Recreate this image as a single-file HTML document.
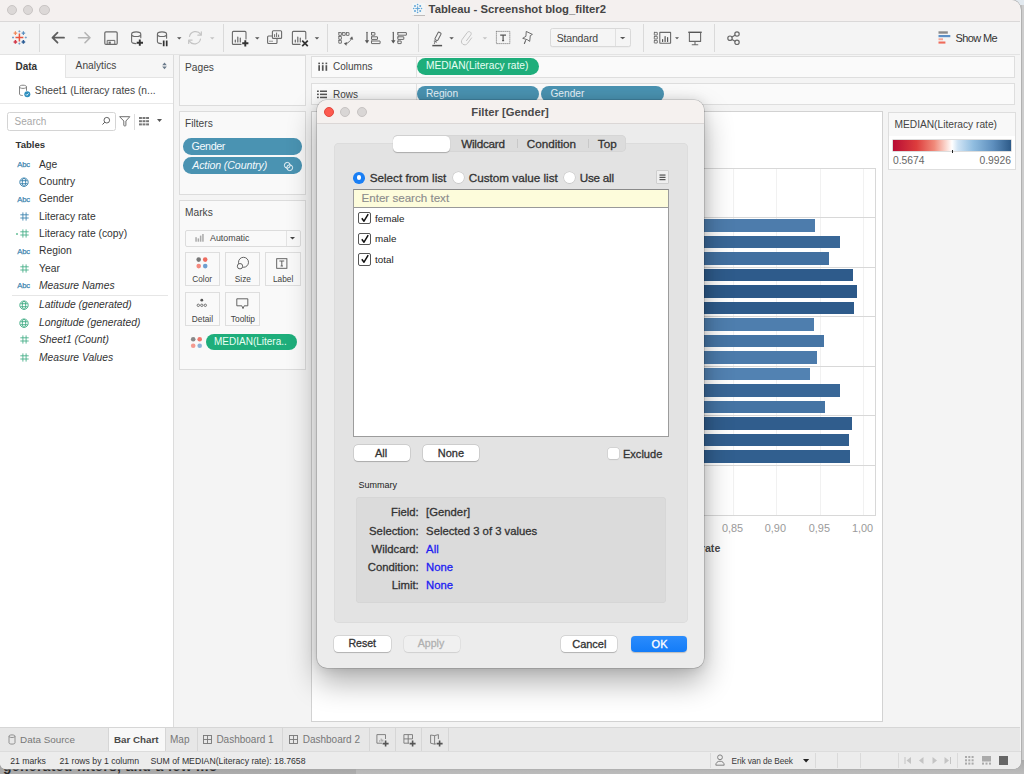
<!DOCTYPE html>
<html><head><meta charset="utf-8">
<style>
*{box-sizing:border-box;margin:0;padding:0}
html,body{width:1024px;height:774px;overflow:hidden;background:#cdcdcd;font-family:"Liberation Sans",sans-serif;color:#333}
.a{position:absolute}
.t{position:absolute;white-space:nowrap}
svg{position:absolute;overflow:visible}
</style></head><body>

<div class="a" style="left:1020.5px;top:0px;width:1px;height:774px;background:#bdbdbd"></div>
<div class="a" style="left:1005px;top:0px;width:19px;height:5px;background:#e2e9ef"></div>
<div class="a" style="left:0px;top:760px;width:1024px;height:14px;background:linear-gradient(#9a9a9a,#adadad)"></div>
<div class="a" style="left:356px;top:760px;width:668px;height:14px;background:linear-gradient(#a9a9a9,#bcbcbc)"></div>
<div class="a" style="left:0;top:740px;width:218px;height:34px;overflow:hidden"><div class="t" style="left:3px;top:17.6px;font-size:14px;line-height:16px;color:#2a2a2a;font-weight:700;letter-spacing:0.3px">generated filters, and a few more</div></div>
<div class="a" style="left:0;top:0;width:1020.7px;height:768.7px;background:#f4f4f4;border-radius:0 10px 8px 6px;overflow:hidden;box-shadow:0 0 0 0.6px #aaa">
<div class="a" style="left:0px;top:0px;width:1020px;height:21px;background:#f4f0ef"></div>
<div class="a" style="left:0px;top:21px;width:1020px;height:1px;background:#dad8d8"></div>
<div class="a" style="left:6.6px;top:4.65px;width:10.3px;height:10.3px;border-radius:50%;background:#dcd8d7;border:0.8px solid #c9c5c4"></div>
<div class="a" style="left:22.85px;top:4.65px;width:10.3px;height:10.3px;border-radius:50%;background:#dcd8d7;border:0.8px solid #c9c5c4"></div>
<div class="a" style="left:39.35px;top:4.65px;width:10.3px;height:10.3px;border-radius:50%;background:#dcd8d7;border:0.8px solid #c9c5c4"></div>
<div class="a" style="left:412px;top:3.1px;width:12.5px;height:12.4px;background:#f3f5f6;box-shadow:0.4px 0.8px 0.8px rgba(0,0,0,.22)"></div>
<svg style="left:412px;top:3px" width="13" height="13" viewBox="0 0 13 13"><g stroke="#5aa2d6" stroke-width="0.8" fill="none">
<path d="M5.6 3.2v4.8M3.2 5.5h4.8"/></g>
<g fill="#62a6d8"><circle cx="5.6" cy="5.5" r="1"/><circle cx="5.6" cy="1.6" r="0.8"/><circle cx="5.6" cy="9.4" r="0.8"/><circle cx="1.7" cy="5.5" r="0.8"/><circle cx="9.5" cy="5.5" r="0.8"/>
<circle cx="3" cy="3" r="1"/><circle cx="8.2" cy="3" r="1"/><circle cx="3" cy="8" r="1"/><circle cx="8.2" cy="8" r="1"/></g></svg>
<div class="t" style="left:428.60px;top:3.07px;font-size:11.3px;line-height:12.62px;color:#444;font-weight:700;font-style:normal;">Tableau - Screenshot blog_filter2</div>
<div class="a" style="left:0px;top:22px;width:1020px;height:32px;background:#f4f4f4"></div>
<div class="a" style="left:0px;top:54px;width:1020px;height:1px;background:#e3e3e3"></div>
<svg style="left:0;top:22px" width="1020" height="33" viewBox="0 22 1020 33">
    <g stroke="#dadada" stroke-width="1">
      <line x1="39.5" y1="24" x2="39.5" y2="52"/>
      <line x1="223.5" y1="24" x2="223.5" y2="52"/>
      <line x1="327.5" y1="24" x2="327.5" y2="52"/>
      <line x1="418.5" y1="24" x2="418.5" y2="52"/>
      <line x1="643.5" y1="24" x2="643.5" y2="52"/>
      <line x1="714.5" y1="24" x2="714.5" y2="52"/>
    </g>
    <!-- tableau logo -->
    <g stroke-width="1.2">
      <path d="M19.4 33.6v7.8M15.5 37.5h7.8" stroke="#e8553f" stroke-width="1.5"/>
      <path d="M15.4 31.3v3.6M13.6 33.1h3.6" stroke="#f08a5d"/>
      <path d="M23.4 31.3v3.6M21.6 33.1h3.6" stroke="#5a8fc0"/>
      <path d="M15.4 40.1v3.6M13.6 41.9h3.6" stroke="#d2384a" stroke-width="1.5"/>
      <path d="M23.4 40.1v3.6M21.6 41.9h3.6" stroke="#2b5c95" stroke-width="1.5"/>
      <path d="M19.4 30.4v2M18.4 31.4h2M19.4 42.6v2M18.4 43.6h2M13 36.5v2M12 37.5h2M25.8 36.5v2M24.8 37.5h2" stroke="#6e9cc8" stroke-width="0.9"/>
    </g>
    <g fill="none" stroke-linecap="round" stroke-linejoin="round">
      <!-- back -->
      <path d="M52.5 37.7h11.5M57.5 32.7l-5 5 5 5" stroke="#5e5e5e" stroke-width="1.8"/>
      <!-- forward -->
      <path d="M78.5 37.7h11.5M85 32.7l5 5-5 5" stroke="#b4b4b4" stroke-width="1.6"/>
      <!-- save -->
      <rect x="104.8" y="31.8" width="12.4" height="12.6" rx="1.2" stroke="#6a6a6a" stroke-width="1.2"/>
      <path d="M107.2 44.2v-3.8h7.6v3.8" stroke="#6a6a6a" stroke-width="1"/>
      <rect x="108.6" y="41.6" width="2.2" height="2.2" fill="#6a6a6a" stroke="none"/>
      <!-- cylinder + -->
      <path d="M131.6 34.2v7.4c0 1.3 1.8 2 4.4 2M131.6 34.2c0-1.5 2.3-2.3 4.6-2.3s4.6.8 4.6 2.3-2.3 2.3-4.6 2.3-4.6-.8-4.6-2.3M140.8 34.2v3.5" stroke="#6a6a6a" stroke-width="1.1"/>
      <path d="M139.8 39.5v6.3M136.7 42.7h6.3" stroke="#333" stroke-width="1.9" stroke-linecap="butt"/>
      <!-- cylinder pause -->
      <path d="M157.4 34.2v7.4c0 1.3 1.8 2 4 2M157.4 34.2c0-1.5 2.3-2.3 4.6-2.3s4.6.8 4.6 2.3-2.3 2.3-4.6 2.3-4.6-.8-4.6-2.3M166.6 34.2v4" stroke="#6a6a6a" stroke-width="1.1"/>
      <path d="M163.7 40.6v5.6M166.7 40.6v5.6" stroke="#333" stroke-width="1.7" stroke-linecap="butt"/>
      <!-- refresh -->
      <path d="M189.5 36.5a6.2 6.2 0 0 1 11.2-2.2M200.5 39a6.2 6.2 0 0 1-11.2 2.2" stroke="#c4c4c4" stroke-width="1.2"/>
      <path d="M201.3 31.8v3.4h-3.4M188.7 43.5v-3.4h3.4" stroke="#c4c4c4" stroke-width="1.2"/>
      <!-- new worksheet -->
      <path d="M241 44.4h-7.6c-.6 0-1-.4-1-1V32.4c0-.6.4-1 1-1h11.6c.6 0 1 .4 1 1V39" stroke="#6a6a6a" stroke-width="1.1"/>
      <path d="M235.3 42v-2M237.8 42v-5M240.3 42v-4" stroke="#6a6a6a" stroke-width="1.2"/>
      <path d="M245.3 40.2v6.2M242.2 43.3h6.2" stroke="#333" stroke-width="1.9" stroke-linecap="butt"/>
      <!-- duplicate -->
      <rect x="267.6" y="36" width="9.4" height="7.5" rx="1" stroke="#6a6a6a" stroke-width="1.1"/>
      <rect x="272.4" y="30.8" width="9.2" height="7.6" rx="1" stroke="#6a6a6a" stroke-width="1.1" fill="#f4f4f4"/>
      <path d="M270 41.6v-.6M272 41.6v-.6M274.6 36.6v-2M276.6 36.6v-3.6M278.6 36.6v-1.6" stroke="#6a6a6a" stroke-width="1"/>
      <!-- clear sheet -->
      <path d="M300 44.4h-6.6c-.6 0-1-.4-1-1V32.4c0-.6.4-1 1-1h11.4c.6 0 1 .4 1 1V39" stroke="#6a6a6a" stroke-width="1.1"/>
      <path d="M295.3 42v-2M297.8 42v-5M300.3 42v-4" stroke="#6a6a6a" stroke-width="1.2"/>
      <path d="M302.2 40.6l5.6 5.6M307.8 40.6l-5.6 5.6" stroke="#333" stroke-width="1.7" stroke-linecap="butt"/>
      <!-- swap -->
      <g stroke="#6a6a6a" stroke-width="0.9">
        <rect x="338.8" y="32.6" width="2.6" height="2.8" rx=".15"/><rect x="342.6" y="32.6" width="2.6" height="2.8" rx=".15"/><rect x="346.4" y="32.6" width="2.6" height="2.8" rx=".15"/>
        <rect x="338.8" y="36.5" width="2.6" height="2.8" rx=".15"/><rect x="338.8" y="40.4" width="2.6" height="2.8" rx=".15"/>
      </g>
      <path d="M345.6 43.8c2.6-.7 4.8-2.6 5.8-5" stroke="#6a6a6a" stroke-width="0.9"/>
      <path d="M350.2 38.4l1.9-1.6.6 2.4z M346.6 42.6l-2.4.9 1.9 1.6z" fill="#555" stroke="#555" stroke-width="0.5"/>
      <!-- sort asc -->
      <path d="M367 32.3v8.5" stroke="#555" stroke-width="1.1"/><path d="M364.8 40.2h4.4L367 43.6z" fill="#555" stroke="none"/>
      <rect x="371.5" y="32.6" width="3.4" height="2.6" rx=".2" stroke="#6a6a6a" stroke-width="1"/>
      <rect x="371.5" y="36.8" width="6" height="2.6" rx=".2" stroke="#6a6a6a" stroke-width="1"/>
      <rect x="371.5" y="41" width="8.6" height="2.6" rx=".2" stroke="#6a6a6a" stroke-width="1"/>
      <!-- sort desc -->
      <path d="M393.3 32.3v8.5" stroke="#555" stroke-width="1.1"/><path d="M391.1 40.2h4.4L393.3 43.6z" fill="#555" stroke="none"/>
      <rect x="397.8" y="32.6" width="8.6" height="2.6" rx=".2" stroke="#6a6a6a" stroke-width="1"/>
      <rect x="397.8" y="36.8" width="6" height="2.6" rx=".2" stroke="#6a6a6a" stroke-width="1"/>
      <rect x="397.8" y="41" width="3.4" height="2.6" rx=".2" stroke="#6a6a6a" stroke-width="1"/>
      <!-- pen -->
      <g transform="translate(-0.8 0.4) rotate(27 438.2 37)" stroke="#6a6a6a">
        <rect x="436.6" y="31.6" width="3.3" height="8.4" rx="0.9" stroke-width="1"/>
        <path d="M436.6 41.6h3.3" stroke-width="1.1" stroke-linecap="butt"/>
        <path d="M438.2 42.8v1.2" stroke-width="0.9"/>
      </g>
      <path d="M432.3 45.6h9.8" stroke="#555" stroke-width="1.5" stroke-linecap="butt"/>
      <!-- paperclip -->
      <path d="M466.5 39.5l4.2-5.6c.8-1.1.6-2.4-.4-3.1s-2.3-.5-3.1.6l-5 6.8c-1.3 1.7-.9 3.7.6 4.8s3.5.8 4.8-.9l4-5.4" stroke="#c4c4c4" stroke-width="1" transform="translate(0,1.2)"/>
      <!-- T dashed -->
      <rect x="496.4" y="31.4" width="13.4" height="12.2" stroke="#8a8a8a" stroke-width="0.8" stroke-dasharray="1 1.1"/>
      <path d="M500.2 35.1h5.8M503.1 35.1v5.4M502.1 40.6h2" stroke="#555" stroke-width="1.2" stroke-linecap="butt"/>
      <!-- pin -->
      <path d="M526.6 31.6l5.8 2.8-2.1 1.2-.6 5.8-2.2-1.6-4.8-1.5 2.9-1.8z" stroke="#666" stroke-width="0.95"/>
      <path d="M525.6 40.6l-1.2 2.9" stroke="#666" stroke-width="1.1"/>
      <!-- show cards -->
      <g stroke="#6a6a6a" stroke-width="0.9">
        <rect x="654.3" y="32.4" width="3" height="2.6" rx=".15"/><rect x="654.3" y="36.4" width="3" height="2.6" rx=".15"/><rect x="654.3" y="40.4" width="3" height="2.6" rx=".15"/>
      </g>
      <rect x="659.8" y="32.4" width="10.8" height="10.8" rx=".2" stroke="#6a6a6a" stroke-width="1.1"/>
      <path d="M662.6 41.5v-2M665.1 41.5v-5M667.6 41.5v-4" stroke="#555" stroke-width="1.2"/>
      <!-- presentation -->
      <path d="M688.3 32.3h13.4" stroke="#555" stroke-width="1.4" stroke-linecap="butt"/>
      <path d="M689.4 32.8v8.6h11.2v-8.6M695 41.4v3.2M692.2 44.7h5.6" stroke="#6a6a6a" stroke-width="1.1"/>
      <!-- share -->
      <circle cx="737" cy="34" r="2.2" stroke="#6a6a6a" stroke-width="1.2"/>
      <circle cx="730" cy="38.2" r="2.2" stroke="#6a6a6a" stroke-width="1.2"/>
      <circle cx="737" cy="42.3" r="2.2" stroke="#6a6a6a" stroke-width="1.2"/>
      <path d="M732 37l3-1.8M732 39.4l3 1.8" stroke="#6a6a6a" stroke-width="1.2"/>
    </g>
    <!-- dropdown triangles -->
    <g fill="#555">
      <path d="M177 37.2h4.5l-2.25 2.2z"/>
      <path d="M255 37.2h4.5l-2.25 2.2z"/>
      <path d="M314.7 37.2h4.5l-2.25 2.2z"/>
      <path d="M449.3 37.2h4.5l-2.25 2.2z"/>
      <path d="M675 37.2h4l-2 2z"/>
    </g>
    <g fill="#c4c4c4">
      <path d="M210 37.2h4.5l-2.25 2.2z"/>
      <path d="M482.7 37.2h4.5l-2.25 2.2z"/>
    </g>
    <!-- show me -->
    <rect x="938.5" y="31.3" width="9.3" height="2.4" fill="#8a8a8a"/>
    <rect x="938.5" y="35" width="11.8" height="2.2" fill="#5c8fc6"/>
    <rect x="938.5" y="38.3" width="4.5" height="1.9" fill="#f4a596"/>
    <rect x="938.5" y="41.5" width="6.9" height="2.1" fill="#ef6b5a"/>
  </svg>
<div class="a" style="left:550.3px;top:28.2px;width:80.6px;height:18.6px;border:1px solid #d9d9d9;border-radius:2.5px;background:#f5f5f5;box-shadow:0 0.5px 0.5px rgba(0,0,0,.05)"></div>
<div class="a" style="left:615.3px;top:29px;width:1px;height:16.6px;background:#e0e0e0"></div>
<svg style="left:620.3px;top:36.9px" width="6" height="3"><path d="M0 0h5.3l-2.65 2.3z" fill="#555"/></svg>
<div class="t" style="left:556.80px;top:32.70px;font-size:10.5px;line-height:11.73px;color:#444;font-weight:400;font-style:normal;letter-spacing:-0.2px">Standard</div>
<div class="t" style="left:955.60px;top:31.65px;font-size:11px;line-height:12.29px;color:#333;font-weight:400;font-style:normal;letter-spacing:-0.65px">Show Me</div>
<div class="a" style="left:0px;top:55px;width:173px;height:672px;background:#fff"></div>
<div class="a" style="left:173px;top:55px;width:1px;height:672px;background:#dcdcdc"></div>
<div class="a" style="left:65px;top:55px;width:108px;height:23.4px;background:#f6f6f6;border-left:1px solid #e4e4e4;border-bottom:1px solid #e4e4e4"></div>
<div class="t" style="left:15.50px;top:60.55px;font-size:10px;line-height:11.17px;color:#333;font-weight:700;font-style:normal;">Data</div>
<div class="t" style="left:75.60px;top:60.37px;font-size:10.2px;line-height:11.39px;color:#444;font-weight:400;font-style:normal;">Analytics</div>
<svg style="left:161.8px;top:62px" width="5" height="8"><path d="M0.2 3.2L2.5 0.6 4.8 3.2zM0.2 4.6L2.5 7.2 4.8 4.6z" fill="#6a7a8a"/></svg>
<svg style="left:18px;top:84px" width="14" height="14" viewBox="0 0 14 14"><g fill="none" stroke="#777" stroke-width="0.9">
<path d="M1.5 2.8v7.2c0 .9 1.3 1.5 3.2 1.5M1.5 2.8c0-1 1.5-1.6 3.5-1.6s3.5.6 3.5 1.6-1.5 1.6-3.5 1.6-3.5-.6-3.5-1.6M8.5 2.8v4"/></g>
<circle cx="9.3" cy="10.3" r="3" fill="#2f8fbf"/><path d="M7.9 10.3l1 1 1.7-1.9" stroke="#fff" stroke-width="0.9" fill="none"/></svg>
<div class="t" style="left:34.80px;top:84.92px;font-size:10.25px;line-height:11.45px;color:#444;font-weight:400;font-style:normal;">Sheet1 (Literacy rates (n...</div>
<div class="a" style="left:0px;top:102.5px;width:173px;height:1px;background:#e8e8e8"></div>
<div class="a" style="left:7px;top:112px;width:108.5px;height:18.5px;border:1px solid #d4d4d4;border-radius:2.5px;background:#fff"></div>
<div class="t" style="left:14.60px;top:115.75px;font-size:10px;line-height:11.17px;color:#a8a8a8;font-weight:400;font-style:normal;">Search</div>
<svg style="left:101px;top:116px" width="10" height="10" viewBox="0 0 10 10"><circle cx="5.8" cy="4.2" r="2.8" fill="none" stroke="#555" stroke-width="0.9"/><path d="M3.8 6.2L1.5 8.5" stroke="#555" stroke-width="1"/></svg>
<svg style="left:119px;top:116px" width="12" height="11" viewBox="0 0 12 11"><path d="M0.6 0.7h10.2L6.9 5v4.3c0 .4-.3.6-.6.6h-.9c-.3 0-.6-.2-.6-.6V5z" fill="none" stroke="#666" stroke-width="0.95" stroke-linejoin="round"/></svg>
<div class="a" style="left:134.3px;top:114px;width:1px;height:16px;background:#ddd"></div>
<svg style="left:139px;top:116.5px" width="11" height="9"><g fill="#777"><rect x="0" y="0" width="2.9" height="2"/><rect x="3.55" y="0" width="2.9" height="2"/><rect x="7.1" y="0" width="2.9" height="2"/><rect x="0" y="3.2" width="2.9" height="2"/><rect x="3.55" y="3.2" width="2.9" height="2"/><rect x="7.1" y="3.2" width="2.9" height="2"/><rect x="0" y="6.4" width="2.9" height="2"/><rect x="3.55" y="6.4" width="2.9" height="2"/><rect x="7.1" y="6.4" width="2.9" height="2"/></g></svg>
<svg style="left:157px;top:119px" width="6" height="4"><path d="M0 0h5l-2.5 3z" fill="#555"/></svg>
<div class="t" style="left:15.50px;top:140.21px;font-size:9.6px;line-height:10.72px;color:#333;font-weight:700;font-style:normal;">Tables</div>
<div class="t" style="left:17.30px;top:160.93px;font-size:7.7px;line-height:8.60px;color:#3f86b0;font-weight:400;font-style:normal;letter-spacing:-0.25px;-webkit-text-stroke:0.25px #3f86b0">Abc</div>
<div class="t" style="left:39.00px;top:158.68px;font-size:10.3px;line-height:11.51px;color:#333;font-weight:400;font-style:normal;">Age</div>
<svg style="left:18.5px;top:177.15px" width="10" height="11" viewBox="0 0 10 11"><g fill="none" stroke="#3f86b0" stroke-width="0.95"><circle cx="5" cy="5.2" r="4.2"/><path d="M1.3 3.7h7.4M1.3 6.7h7.4"/><ellipse cx="5" cy="5.2" rx="1.7" ry="4.2"/></g></svg>
<div class="t" style="left:39.00px;top:176.03px;font-size:10.3px;line-height:11.51px;color:#333;font-weight:400;font-style:normal;">Country</div>
<div class="t" style="left:17.30px;top:195.63px;font-size:7.7px;line-height:8.60px;color:#3f86b0;font-weight:400;font-style:normal;letter-spacing:-0.25px;-webkit-text-stroke:0.25px #3f86b0">Abc</div>
<div class="t" style="left:39.00px;top:193.38px;font-size:10.3px;line-height:11.51px;color:#333;font-weight:400;font-style:normal;">Gender</div>
<svg style="left:19.6px;top:211.85px" width="9" height="9" viewBox="0 0 9 9"><path d="M2.9 0.4v8.2M6.1 0.4v8.2M0.3 2.8h8.4M0.3 6h8.4" stroke="#3f86b0" stroke-width="0.9" fill="none"/></svg>
<div class="t" style="left:39.00px;top:210.73px;font-size:10.3px;line-height:11.51px;color:#333;font-weight:400;font-style:normal;">Literacy rate</div>
<svg style="left:19.6px;top:229.20px" width="9" height="9" viewBox="0 0 9 9"><path d="M2.9 0.4v8.2M6.1 0.4v8.2M0.3 2.8h8.4M0.3 6h8.4" stroke="#4ab08a" stroke-width="0.9" fill="none"/></svg>
<div class="a" style="left:16px;top:233.30px;width:2px;height:2px;background:#8ccfb2"></div>
<div class="t" style="left:39.00px;top:228.08px;font-size:10.3px;line-height:11.51px;color:#333;font-weight:400;font-style:normal;">Literacy rate (copy)</div>
<div class="t" style="left:17.30px;top:247.68px;font-size:7.7px;line-height:8.60px;color:#3f86b0;font-weight:400;font-style:normal;letter-spacing:-0.25px;-webkit-text-stroke:0.25px #3f86b0">Abc</div>
<div class="t" style="left:39.00px;top:245.43px;font-size:10.3px;line-height:11.51px;color:#333;font-weight:400;font-style:normal;">Region</div>
<svg style="left:19.6px;top:263.90px" width="9" height="9" viewBox="0 0 9 9"><path d="M2.9 0.4v8.2M6.1 0.4v8.2M0.3 2.8h8.4M0.3 6h8.4" stroke="#4ab08a" stroke-width="0.9" fill="none"/></svg>
<div class="t" style="left:39.00px;top:262.78px;font-size:10.3px;line-height:11.51px;color:#333;font-weight:400;font-style:normal;">Year</div>
<div class="t" style="left:17.30px;top:282.38px;font-size:7.7px;line-height:8.60px;color:#3f86b0;font-weight:400;font-style:normal;letter-spacing:-0.25px;-webkit-text-stroke:0.25px #3f86b0">Abc</div>
<div class="t" style="left:39.00px;top:280.13px;font-size:10.3px;line-height:11.51px;color:#333;font-weight:400;font-style:italic;">Measure Names</div>
<div class="a" style="left:12.3px;top:295.2px;width:156px;height:1px;background:#e6e6e6"></div>
<svg style="left:18.5px;top:300.20px" width="10" height="11" viewBox="0 0 10 11"><g fill="none" stroke="#4ab08a" stroke-width="0.95"><circle cx="5" cy="5.2" r="4.2"/><path d="M1.3 3.7h7.4M1.3 6.7h7.4"/><ellipse cx="5" cy="5.2" rx="1.7" ry="4.2"/></g></svg>
<div class="t" style="left:39.00px;top:299.08px;font-size:10.3px;line-height:11.51px;color:#333;font-weight:400;font-style:italic;">Latitude (generated)</div>
<svg style="left:18.5px;top:317.75px" width="10" height="11" viewBox="0 0 10 11"><g fill="none" stroke="#4ab08a" stroke-width="0.95"><circle cx="5" cy="5.2" r="4.2"/><path d="M1.3 3.7h7.4M1.3 6.7h7.4"/><ellipse cx="5" cy="5.2" rx="1.7" ry="4.2"/></g></svg>
<div class="t" style="left:39.00px;top:316.63px;font-size:10.3px;line-height:11.51px;color:#333;font-weight:400;font-style:italic;">Longitude (generated)</div>
<svg style="left:19.6px;top:335.30px" width="9" height="9" viewBox="0 0 9 9"><path d="M2.9 0.4v8.2M6.1 0.4v8.2M0.3 2.8h8.4M0.3 6h8.4" stroke="#4ab08a" stroke-width="0.9" fill="none"/></svg>
<div class="t" style="left:39.00px;top:334.18px;font-size:10.3px;line-height:11.51px;color:#333;font-weight:400;font-style:italic;">Sheet1 (Count)</div>
<svg style="left:19.6px;top:352.85px" width="9" height="9" viewBox="0 0 9 9"><path d="M2.9 0.4v8.2M6.1 0.4v8.2M0.3 2.8h8.4M0.3 6h8.4" stroke="#4ab08a" stroke-width="0.9" fill="none"/></svg>
<div class="t" style="left:39.00px;top:351.73px;font-size:10.3px;line-height:11.51px;color:#333;font-weight:400;font-style:italic;">Measure Values</div>
<div class="a" style="left:179.2px;top:55.3px;width:126.6px;height:50.4px;background:#f9f9f9;border:1px solid #dcdcdc"></div>
<div class="t" style="left:185.00px;top:62.27px;font-size:10.2px;line-height:11.39px;color:#444;font-weight:400;font-style:normal;">Pages</div>
<div class="a" style="left:179.2px;top:111.3px;width:126.6px;height:83.3px;background:#f9f9f9;border:1px solid #dcdcdc"></div>
<div class="t" style="left:185.00px;top:118.37px;font-size:10.2px;line-height:11.39px;color:#444;font-weight:400;font-style:normal;">Filters</div>
<div class="a" style="left:183px;top:138.2px;width:119px;height:16.5px;border-radius:8.25px;background:#4a93b2"></div>
<div class="t" style="left:191.60px;top:140.13px;font-size:10.8px;line-height:12.06px;color:#f4fafd;font-weight:400;font-style:normal;letter-spacing:-0.45px">Gender</div>
<div class="a" style="left:183px;top:157.4px;width:119px;height:16.5px;border-radius:8.25px;background:#4a93b2"></div>
<div class="t" style="left:192.20px;top:160.01px;font-size:10.6px;line-height:11.84px;color:#f4fafd;font-weight:400;font-style:italic;letter-spacing:-0.1px">Action (Country)</div>
<svg style="left:282.6px;top:160.6px" width="11" height="11" viewBox="0 0 11 11"><g fill="none" stroke="#fff" stroke-width="0.9"><circle cx="4.3" cy="4.3" r="2.9"/><circle cx="6.7" cy="6.7" r="2.9"/></g></svg>
<div class="a" style="left:179.2px;top:199.6px;width:126.6px;height:170.8px;background:#f9f9f9;border:1px solid #dcdcdc"></div>
<div class="t" style="left:185.00px;top:206.57px;font-size:10.2px;line-height:11.39px;color:#444;font-weight:400;font-style:normal;">Marks</div>
<div class="a" style="left:185px;top:229.5px;width:115.6px;height:17.2px;border:1px solid #dcdcdc;border-radius:2px;background:#f9f9f9"></div>
<div class="a" style="left:285.5px;top:230.5px;width:1px;height:15.2px;background:#e4e4e4"></div>
<svg style="left:290px;top:236.8px" width="6" height="4"><path d="M0 0h5l-2.5 2.6z" fill="#444"/></svg>
<svg style="left:195px;top:234px" width="9" height="8"><g fill="#aaa"><rect x="0.3" y="3.2" width="1.5" height="4.5"/><rect x="2.6" y="4.4" width="1.5" height="3.3"/><rect x="4.9" y="1.6" width="1.5" height="6.1"/><rect x="7.2" y="0" width="1.5" height="7.7"/></g></svg>
<div class="t" style="left:210.00px;top:233.55px;font-size:8.9px;line-height:9.94px;color:#444;font-weight:400;font-style:normal;">Automatic</div>
<div class="a" style="left:185px;top:251.8px;width:35px;height:34.2px;background:#f9f9f9;border:1px solid #dedede"></div>
<div class="a" style="left:225.4px;top:251.8px;width:34.2px;height:34.2px;background:#f9f9f9;border:1px solid #dedede"></div>
<div class="a" style="left:265.4px;top:251.8px;width:35.2px;height:34.2px;background:#f9f9f9;border:1px solid #dedede"></div>
<div class="a" style="left:185px;top:291.6px;width:35px;height:34.2px;background:#f9f9f9;border:1px solid #dedede"></div>
<div class="a" style="left:225.4px;top:291.6px;width:34.2px;height:34.2px;background:#f9f9f9;border:1px solid #dedede"></div>
<svg style="left:194px;top:255px" width="16" height="16"><circle cx="4.7" cy="4.6" r="2.3" fill="#777"/><circle cx="11.2" cy="4.6" r="2.3" fill="#ef6b5f"/><circle cx="4.7" cy="11.1" r="2.3" fill="#f4897e"/><circle cx="11.2" cy="11.1" r="2.3" fill="#6e9fd0"/></svg>
<div class="t" style="left:192.20px;top:275.29px;font-size:8.3px;line-height:9.27px;color:#444;font-weight:400;font-style:normal;">Color</div>
<svg style="left:235px;top:256px" width="16" height="16" viewBox="0 0 16 16"><g fill="none" stroke="#555" stroke-width="0.9"><circle cx="8.5" cy="6.3" r="5"/><circle cx="5" cy="10.2" r="2.7" fill="#f9f9f9"/></g></svg>
<div class="t" style="left:234.80px;top:275.29px;font-size:8.3px;line-height:9.27px;color:#444;font-weight:400;font-style:normal;">Size</div>
<svg style="left:276px;top:257.5px" width="12" height="11" viewBox="0 0 12 11"><rect x="0.7" y="0.7" width="10.2" height="9.6" fill="none" stroke="#555" stroke-width="0.9"/><path d="M3.4 3h4.8M5.8 3v5M4.6 8h2.4" stroke="#555" stroke-width="0.9" fill="none"/></svg>
<div class="t" style="left:273.00px;top:275.29px;font-size:8.3px;line-height:9.27px;color:#444;font-weight:400;font-style:normal;">Label</div>
<svg style="left:196px;top:297px" width="13" height="11" viewBox="0 0 13 11"><circle cx="5.8" cy="3.2" r="1.4" fill="#555"/><g fill="none" stroke="#555" stroke-width="0.8"><circle cx="2.3" cy="8.3" r="1.2"/><circle cx="5.8" cy="8.3" r="1.2"/><circle cx="9.3" cy="8.3" r="1.2"/></g></svg>
<div class="t" style="left:191.80px;top:315.09px;font-size:8.3px;line-height:9.27px;color:#444;font-weight:400;font-style:normal;">Detail</div>
<svg style="left:236px;top:297.5px" width="13" height="12" viewBox="0 0 13 12"><path d="M0.8 0.8h11v7H8.2L7 10.6 5.8 7.8H0.8z" fill="none" stroke="#555" stroke-width="0.9" stroke-linejoin="round"/></svg>
<div class="t" style="left:230.80px;top:315.00px;font-size:8.4px;line-height:9.38px;color:#444;font-weight:400;font-style:normal;">Tooltip</div>
<svg style="left:189.5px;top:335.5px" width="13" height="13"><circle cx="3.2" cy="3.2" r="2.3" fill="#888"/><circle cx="9.7" cy="3.2" r="2.3" fill="#f0776c"/><circle cx="3.2" cy="9.7" r="2.3" fill="#f49a90"/><circle cx="9.7" cy="9.7" r="2.3" fill="#8db2d8"/></svg>
<div class="a" style="left:205.5px;top:333.6px;width:91.7px;height:16.4px;border-radius:8.2px;background:#1eae7b"></div>
<div class="t" style="left:214.00px;top:336.15px;font-size:10px;line-height:11.17px;color:#e8fff4;font-weight:400;font-style:normal;">MEDIAN(Litera..</div>
<div class="a" style="left:311.3px;top:55.5px;width:704px;height:22px;background:#fafafa;border:1px solid #dedede"></div>
<div class="a" style="left:415.5px;top:56.5px;width:1px;height:20px;background:#e2e2e2"></div>
<div class="a" style="left:311.3px;top:83.3px;width:704px;height:22px;background:#fafafa;border:1px solid #dedede"></div>
<div class="a" style="left:415.5px;top:84.3px;width:1px;height:20px;background:#e2e2e2"></div>
<svg style="left:317.5px;top:61.5px" width="10" height="10"><g fill="#555"><rect x="0.3" y="0.6" width="1.7" height="1.6"/><rect x="3.9" y="0.6" width="1.7" height="1.6"/><rect x="7.5" y="0.6" width="1.7" height="1.6"/><rect x="0.3" y="3.2" width="1.7" height="5.6"/><rect x="3.9" y="3.2" width="1.7" height="5.6"/><rect x="7.5" y="3.2" width="1.7" height="5.6"/></g></svg>
<div class="t" style="left:333.00px;top:60.75px;font-size:10px;line-height:11.17px;color:#444;font-weight:400;font-style:normal;">Columns</div>
<svg style="left:317px;top:89.5px" width="11" height="10"><g fill="#555"><rect x="0" y="0.5" width="1.8" height="1.5"/><rect x="3" y="0.5" width="7" height="1.5"/><rect x="0" y="3.6" width="1.8" height="1.5"/><rect x="3" y="3.6" width="7" height="1.5"/><rect x="0" y="6.7" width="1.8" height="1.5"/><rect x="3" y="6.7" width="7" height="1.5"/></g></svg>
<div class="t" style="left:333.00px;top:88.55px;font-size:10px;line-height:11.17px;color:#444;font-weight:400;font-style:normal;">Rows</div>
<div class="a" style="left:416.8px;top:57.8px;width:122.5px;height:16.8px;border-radius:8.4px;background:#1eae7b"></div>
<div class="t" style="left:425.90px;top:60.47px;font-size:10.2px;line-height:11.39px;color:#e8fff4;font-weight:400;font-style:normal;">MEDIAN(Literacy rate)</div>
<div class="a" style="left:416.8px;top:85.6px;width:122.5px;height:16.8px;border-radius:8.4px;background:#4a93b2"></div>
<div class="t" style="left:425.90px;top:88.27px;font-size:10.2px;line-height:11.39px;color:#e8f4fa;font-weight:400;font-style:normal;">Region</div>
<div class="a" style="left:541.3px;top:85.6px;width:122.5px;height:16.8px;border-radius:8.4px;background:#4a93b2"></div>
<div class="t" style="left:550.40px;top:88.27px;font-size:10.2px;line-height:11.39px;color:#e8f4fa;font-weight:400;font-style:normal;">Gender</div>
<div class="a" style="left:311.3px;top:111.25px;width:571.5px;height:610.5px;background:#fff;border:1px solid #d2d2d2"></div>
<div class="a" style="left:400px;top:167.5px;width:475.5px;height:1px;background:#d8d8d8"></div>
<div class="a" style="left:875px;top:167.5px;width:1px;height:348px;background:#d8d8d8"></div>
<div class="a" style="left:400px;top:514.8px;width:476px;height:1px;background:#d8d8d8"></div>
<div class="a" style="left:690.0px;top:168.5px;width:1px;height:346.3px;background:#f1f1f1"></div>
<div class="a" style="left:733.2px;top:168.5px;width:1px;height:346.3px;background:#f1f1f1"></div>
<div class="a" style="left:776.4px;top:168.5px;width:1px;height:346.3px;background:#f1f1f1"></div>
<div class="a" style="left:819.7px;top:168.5px;width:1px;height:346.3px;background:#f1f1f1"></div>
<div class="a" style="left:862.9px;top:168.5px;width:1px;height:346.3px;background:#f1f1f1"></div>
<div class="a" style="left:400px;top:217px;width:475.5px;height:1px;background:#d8d8d8"></div>
<div class="a" style="left:400px;top:266.5px;width:475.5px;height:1px;background:#d8d8d8"></div>
<div class="a" style="left:400px;top:316px;width:475.5px;height:1px;background:#d8d8d8"></div>
<div class="a" style="left:400px;top:365.5px;width:475.5px;height:1px;background:#d8d8d8"></div>
<div class="a" style="left:400px;top:415px;width:475.5px;height:1px;background:#d8d8d8"></div>
<div class="a" style="left:400px;top:464.5px;width:475.5px;height:1px;background:#d8d8d8"></div>
<div class="a" style="left:600px;top:219.4px;width:215.29999999999995px;height:12.2px;background:#4d7cac"></div>
<div class="a" style="left:600px;top:235.9px;width:240.0px;height:12.2px;background:#396797"></div>
<div class="a" style="left:600px;top:252.4px;width:229.20000000000005px;height:12.2px;background:#4270a0"></div>
<div class="a" style="left:600px;top:268.9px;width:253.39999999999998px;height:12.2px;background:#2e5b8b"></div>
<div class="a" style="left:600px;top:285.4px;width:256.79999999999995px;height:12.2px;background:#2c5989"></div>
<div class="a" style="left:600px;top:301.9px;width:254.10000000000002px;height:12.2px;background:#2e5b8b"></div>
<div class="a" style="left:600px;top:318.4px;width:213.70000000000005px;height:12.2px;background:#4e7eae"></div>
<div class="a" style="left:600px;top:334.9px;width:224.39999999999998px;height:12.2px;background:#4675a5"></div>
<div class="a" style="left:600px;top:351.4px;width:216.79999999999995px;height:12.2px;background:#4c7bab"></div>
<div class="a" style="left:600px;top:367.9px;width:209.5px;height:12.2px;background:#5282b2"></div>
<div class="a" style="left:600px;top:384.4px;width:239.89999999999998px;height:12.2px;background:#396797"></div>
<div class="a" style="left:600px;top:400.9px;width:225.0px;height:12.2px;background:#4574a4"></div>
<div class="a" style="left:600px;top:417.4px;width:251.70000000000005px;height:12.2px;background:#305d8d"></div>
<div class="a" style="left:600px;top:433.9px;width:249.20000000000005px;height:12.2px;background:#325f8f"></div>
<div class="a" style="left:600px;top:450.4px;width:249.79999999999995px;height:12.2px;background:#315f8f"></div>
<div class="t" style="left:732.50px;transform:translateX(-50%);top:521.94px;font-size:10.9px;line-height:12.18px;color:#9a9a9a;font-weight:400;font-style:normal;">0,85</div>
<div class="t" style="left:775.40px;transform:translateX(-50%);top:521.94px;font-size:10.9px;line-height:12.18px;color:#9a9a9a;font-weight:400;font-style:normal;">0,90</div>
<div class="t" style="left:819.40px;transform:translateX(-50%);top:521.94px;font-size:10.9px;line-height:12.18px;color:#9a9a9a;font-weight:400;font-style:normal;">0,95</div>
<div class="t" style="left:862.50px;transform:translateX(-50%);top:521.94px;font-size:10.9px;line-height:12.18px;color:#9a9a9a;font-weight:400;font-style:normal;">1,00</div>
<div class="t" style="left:720.30px;transform:translateX(-100%);top:542.61px;font-size:10.6px;line-height:11.84px;color:#4a4a4a;font-weight:700;font-style:normal;">Literacy rate</div>
<div class="a" style="left:888.4px;top:111.5px;width:127.3px;height:58.6px;background:#fff;border:1px solid #dedede"></div>
<div class="a" style="left:889.4px;top:112.5px;width:125.3px;height:23.5px;background:#f8f8f8"></div>
<div class="t" style="left:894.50px;top:118.77px;font-size:10.2px;line-height:11.39px;color:#444;font-weight:400;font-style:normal;">MEDIAN(Literacy rate)</div>
<div class="a" style="left:892.9px;top:139.8px;width:118.1px;height:11.5px;background:linear-gradient(90deg,#b80d35 0%,#dd3d3d 20%,#f08a7a 35%,#fbd8d0 45%,#ffffff 50%,#cfe3f4 55%,#90bde0 68%,#5d8ebd 85%,#2d5a88 100%);box-shadow:0 0 0 0.5px #bbb"></div>
<div class="a" style="left:952.2px;top:150.2px;width:1px;height:2.6px;background:#222"></div>
<div class="t" style="left:893.00px;top:154.98px;font-size:10.3px;line-height:11.51px;color:#666;font-weight:400;font-style:normal;">0.5674</div>
<div class="t" style="left:1011.00px;transform:translateX(-100%);top:154.98px;font-size:10.3px;line-height:11.51px;color:#666;font-weight:400;font-style:normal;">0.9926</div>
<div class="a" style="left:0px;top:727.3px;width:1020px;height:24.5px;background:#e7e7e7;border-top:1px solid #d6d6d6"></div>
<div class="a" style="left:108.3px;top:728.3px;width:56.7px;height:23.5px;background:#f8f8f8"></div>
<div class="a" style="left:108px;top:728.3px;width:1px;height:23.5px;background:#d6d6d6"></div>
<div class="a" style="left:165.2px;top:728.3px;width:1px;height:23.5px;background:#d6d6d6"></div>
<div class="a" style="left:196.6px;top:728.3px;width:1px;height:23.5px;background:#d6d6d6"></div>
<div class="a" style="left:282.3px;top:728.3px;width:1px;height:23.5px;background:#d6d6d6"></div>
<div class="a" style="left:368.5px;top:728.3px;width:1px;height:23.5px;background:#d6d6d6"></div>
<div class="a" style="left:395.3px;top:728.3px;width:1px;height:23.5px;background:#d6d6d6"></div>
<div class="a" style="left:421px;top:728.3px;width:1px;height:23.5px;background:#d6d6d6"></div>
<div class="a" style="left:448px;top:728.3px;width:1px;height:23.5px;background:#d6d6d6"></div>
<svg style="left:7.5px;top:733.5px" width="8" height="11" viewBox="0 0 8 11"><path d="M1 2.2v6.6c0 .8 1.2 1.3 3 1.3s3-.5 3-1.3V2.2M1 2.2c0-.8 1.2-1.3 3-1.3s3 .5 3 1.3-1.2 1.3-3 1.3-3-.5-3-1.3" fill="none" stroke="#888" stroke-width="0.9"/></svg>
<div class="t" style="left:20.10px;top:734.44px;font-size:9.9px;line-height:11.06px;color:#777;font-weight:400;font-style:normal;">Data Source</div>
<div class="t" style="left:113.90px;top:734.73px;font-size:9.8px;line-height:10.95px;color:#4a4a4a;font-weight:700;font-style:normal;">Bar Chart</div>
<div class="t" style="left:170.00px;top:734.35px;font-size:10px;line-height:11.17px;color:#777;font-weight:400;font-style:normal;">Map</div>
<svg style="left:203.2px;top:734.5px" width="9" height="9" viewBox="0 0 9 9"><rect x="0.5" y="0.5" width="8" height="8" fill="none" stroke="#777" stroke-width="0.9"/><path d="M4.5 0.5v8M0.5 4.5h8" stroke="#777" stroke-width="0.9"/></svg>
<div class="t" style="left:216.40px;top:734.35px;font-size:10px;line-height:11.17px;color:#777;font-weight:400;font-style:normal;">Dashboard 1</div>
<svg style="left:289px;top:734.5px" width="9" height="9" viewBox="0 0 9 9"><rect x="0.5" y="0.5" width="8" height="8" fill="none" stroke="#777" stroke-width="0.9"/><path d="M4.5 0.5v8M0.5 4.5h8" stroke="#777" stroke-width="0.9"/></svg>
<div class="t" style="left:302.70px;top:734.35px;font-size:10px;line-height:11.17px;color:#777;font-weight:400;font-style:normal;">Dashboard 2</div>
<svg style="left:375px;top:733px" width="16" height="16" viewBox="0 0 16 16"><g fill="none" stroke="#777" stroke-width="0.9"><path d="M7 10.2H1.9V1.6h8.6V6"/></g><path d="M4.6 8.6v-1.2M6.2 8.6v-3M7.8 8.6v-2" stroke="#888" stroke-width="0.8"/><path d="M10.6 7.6v6M7.6 10.6h6" stroke="#555" stroke-width="1.6"/></svg>
<svg style="left:402px;top:733px" width="16" height="16" viewBox="0 0 16 16"><g fill="none" stroke="#777" stroke-width="0.9"><path d="M7 10.2H1.9V1.6h8.6V6M6.2 1.6v8.6M1.9 5.9h8.6"/></g><path d="M10.6 7.6v6M7.6 10.6h6" stroke="#555" stroke-width="1.6"/></svg>
<svg style="left:428.5px;top:733px" width="16" height="16" viewBox="0 0 16 16"><g fill="none" stroke="#777" stroke-width="0.9"><path d="M1.6 2v8.2l4 1V2.6zM5.6 2.6L9.4 1.6V6M5.6 11.2L7 10.8"/></g><path d="M10.6 7.6v6M7.6 10.6h6" stroke="#555" stroke-width="1.6"/></svg>
<div class="a" style="left:0px;top:751.2px;width:1021px;height:17.6px;background:#ececec;border-top:1px solid #dcdcdc"></div>
<div class="t" style="left:10.20px;top:757.03px;font-size:8.7px;line-height:9.72px;color:#333;font-weight:400;font-style:normal;">21 marks</div>
<div class="t" style="left:59.50px;top:757.03px;font-size:8.7px;line-height:9.72px;color:#333;font-weight:400;font-style:normal;">21 rows by 1 column</div>
<div class="t" style="left:150.50px;top:757.03px;font-size:8.7px;line-height:9.72px;color:#333;font-weight:400;font-style:normal;">SUM of MEDIAN(Literacy rate): 18.7658</div>
<div class="a" style="left:709.5px;top:752.8px;width:1px;height:15.3px;background:#dadada"></div>
<div class="a" style="left:814.5px;top:752.8px;width:1px;height:15.3px;background:#dadada"></div>
<div class="a" style="left:837.2px;top:752.8px;width:1px;height:15.3px;background:#dadada"></div>
<div class="a" style="left:859.8px;top:752.8px;width:1px;height:15.3px;background:#dadada"></div>
<div class="a" style="left:898.3px;top:752.8px;width:1px;height:15.3px;background:#dadada"></div>
<div class="a" style="left:957.3px;top:752.8px;width:1px;height:15.3px;background:#dadada"></div>
<svg style="left:714.5px;top:754px" width="10" height="12" viewBox="0 0 10 12"><circle cx="5" cy="3.3" r="2.4" fill="none" stroke="#777" stroke-width="0.9"/><path d="M0.8 11.2c0-2.6 1.8-4 4.2-4s4.2 1.4 4.2 4z" fill="none" stroke="#777" stroke-width="0.9"/></svg>
<div class="t" style="left:731.60px;top:757.19px;font-size:8.3px;line-height:9.27px;color:#3a3a3a;font-weight:400;font-style:normal;letter-spacing:-0.1px">Erik van de Beek</div>
<svg style="left:802.5px;top:759.4px" width="7" height="5"><path d="M0 0h6.2l-3.1 3.6z" fill="#222"/></svg>
<svg style="left:904px;top:756.2px" width="48" height="9" viewBox="0 0 48 9"><g fill="#c4c4c4">
<rect x="0.5" y="1" width="1" height="7"/><path d="M7 1v7L2.5 4.5z"/>
<path d="M19.5 1v7L15 4.5z"/>
<path d="M28.5 1v7L33 4.5z"/>
<path d="M40.5 1v7L45 4.5z"/><rect x="46" y="1" width="1" height="7"/></g></svg>
<svg style="left:964.5px;top:755.5px" width="45" height="10"><g fill="#aaa">
<rect x="0" y="0" width="2" height="2"/><rect x="3.3" y="0" width="2" height="2"/><rect x="6.6" y="0" width="2" height="2"/>
<rect x="0" y="3.3" width="2" height="2"/><rect x="3.3" y="3.3" width="2" height="2"/><rect x="6.6" y="3.3" width="2" height="2"/>
<rect x="0" y="6.6" width="2" height="2"/><rect x="3.3" y="6.6" width="2" height="2"/><rect x="6.6" y="6.6" width="2" height="2"/>
<rect x="17" y="0" width="9" height="5.5"/><rect x="17" y="6.6" width="2" height="2"/><rect x="20.5" y="6.6" width="2" height="2"/><rect x="24" y="6.6" width="2" height="2"/>
</g><rect x="34" y="0" width="9" height="9" fill="#666"/></svg>
</div>
<div class="a" style="left:316.8px;top:99.6px;width:387.3px;height:568.4px;border-radius:10px;background:#ececec;box-shadow:0 0 0 0.6px rgba(0,0,0,.22),0 14px 30px rgba(0,0,0,.32),0 0 12px rgba(0,0,0,.12);overflow:hidden">
<div class="a" style="left:0;top:0;width:388px;height:24px;background:#f5f1ef;border-bottom:1px solid #dbd7d6"></div>
</div>
<div class="a" style="left:323.6px;top:106.5px;width:10.4px;height:10.4px;border-radius:50%;background:#fd5a4f;border:0.5px solid #e2463c"></div>
<div class="a" style="left:339.8px;top:106.5px;width:10.4px;height:10.4px;border-radius:50%;background:#d9d6d5;border:0.5px solid #c7c3c2"></div>
<div class="a" style="left:356.8px;top:106.5px;width:10.4px;height:10.4px;border-radius:50%;background:#d9d6d5;border:0.5px solid #c7c3c2"></div>
<div class="t" style="left:471.30px;top:105.62px;font-size:11.25px;line-height:12.57px;color:#4a4a4a;font-weight:700;font-style:normal;">Filter [Gender]</div>
<div class="a" style="left:334px;top:143.3px;width:353.9px;height:479.4px;background:#e3e3e3;border-radius:5px;box-shadow:inset 0 0 0 0.5px #d6d6d6"></div>
<div class="a" style="left:392.7px;top:135.2px;width:233.5px;height:16.4px;background:#dcdcdc;border-radius:5px;box-shadow:inset 0 0 0 0.5px #d0d0d0"></div>
<div class="a" style="left:393.2px;top:135.6px;width:56.6px;height:16px;background:#fff;border-radius:4.5px;box-shadow:0 0.5px 1px rgba(0,0,0,.25)"></div>
<div class="t" style="left:461.20px;top:137.21px;font-size:11.7px;line-height:13.07px;color:#333;font-weight:400;font-style:normal;-webkit-text-stroke:0.3px currentColor;letter-spacing:-0.25px">Wildcard</div>
<div class="a" style="left:516.5px;top:139px;width:1px;height:9px;background:#c8c8c8"></div>
<div class="t" style="left:526.70px;top:137.21px;font-size:11.7px;line-height:13.07px;color:#333;font-weight:400;font-style:normal;-webkit-text-stroke:0.3px currentColor">Condition</div>
<div class="a" style="left:587.6px;top:139px;width:1px;height:9px;background:#c8c8c8"></div>
<div class="t" style="left:597.80px;top:137.21px;font-size:11.7px;line-height:13.07px;color:#333;font-weight:400;font-style:normal;-webkit-text-stroke:0.3px currentColor">Top</div>
<div class="a" style="left:353.3px;top:172px;width:11.6px;height:11.6px;border-radius:50%;background:#1a7ff5"></div>
<div class="a" style="left:356.7px;top:175.4px;width:4.8px;height:4.8px;border-radius:50%;background:#fff"></div>
<div class="t" style="left:369.70px;top:171.31px;font-size:11.7px;line-height:13.07px;color:#333;font-weight:400;font-style:normal;-webkit-text-stroke:0.3px currentColor">Select from list</div>
<div class="a" style="left:453.2px;top:172.2px;width:11px;height:11px;border-radius:50%;background:#fff;box-shadow:0 0 0 0.5px #c4c4c4,0 0.5px 1px rgba(0,0,0,.15)"></div>
<div class="a" style="left:563.8px;top:172.2px;width:11px;height:11px;border-radius:50%;background:#fff;box-shadow:0 0 0 0.5px #c4c4c4,0 0.5px 1px rgba(0,0,0,.15)"></div>
<div class="t" style="left:468.80px;top:171.31px;font-size:11.7px;line-height:13.07px;color:#333;font-weight:400;font-style:normal;-webkit-text-stroke:0.3px currentColor">Custom value list</div>
<div class="t" style="left:579.80px;top:171.31px;font-size:11.7px;line-height:13.07px;color:#333;font-weight:400;font-style:normal;-webkit-text-stroke:0.3px currentColor;letter-spacing:-0.25px">Use all</div>
<div class="a" style="left:656.4px;top:170.3px;width:12.4px;height:13.6px;background:#efefef;border:1px solid #cfcfcf;border-radius:1px"></div>
<svg style="left:659px;top:173.5px" width="8" height="7"><g fill="#444"><rect x="0.5" y="0.5" width="6" height="1.1"/><rect x="0.5" y="2.8" width="6" height="1.1"/><rect x="0.5" y="5.1" width="6" height="1.1"/></g></svg>
<div class="a" style="left:352.6px;top:189.4px;width:316.2px;height:247.6px;background:#fff;border:1px solid #9c9c9c;border-top-color:#8a8a8a"></div>
<div class="a" style="left:353.6px;top:190.4px;width:314.2px;height:17.4px;background:#fdfcdb;border-bottom:1px solid #999"></div>
<div class="t" style="left:361.50px;top:192.20px;font-size:11.6px;line-height:12.96px;color:#8d8d8d;font-weight:400;font-style:normal;-webkit-text-stroke:0.15px currentColor">Enter search text</div>
<div class="a" style="left:358.3px;top:212.00px;width:12.5px;height:12.4px;border:1.2px solid #555;border-radius:2px;background:#fff"></div>
<svg style="left:360px;top:213.20px" width="10" height="10" viewBox="0 0 10 10"><path d="M1.8 5.2l2.2 3 4.2-7" fill="none" stroke="#111" stroke-width="1.5" stroke-linejoin="round"/></svg>
<div class="t" style="left:375.10px;top:213.53px;font-size:9.8px;line-height:10.95px;color:#222;font-weight:400;font-style:normal;">female</div>
<div class="a" style="left:358.3px;top:232.60px;width:12.5px;height:12.4px;border:1.2px solid #555;border-radius:2px;background:#fff"></div>
<svg style="left:360px;top:233.80px" width="10" height="10" viewBox="0 0 10 10"><path d="M1.8 5.2l2.2 3 4.2-7" fill="none" stroke="#111" stroke-width="1.5" stroke-linejoin="round"/></svg>
<div class="t" style="left:375.10px;top:234.13px;font-size:9.8px;line-height:10.95px;color:#222;font-weight:400;font-style:normal;">male</div>
<div class="a" style="left:358.3px;top:253.20px;width:12.5px;height:12.4px;border:1.2px solid #555;border-radius:2px;background:#fff"></div>
<svg style="left:360px;top:254.40px" width="10" height="10" viewBox="0 0 10 10"><path d="M1.8 5.2l2.2 3 4.2-7" fill="none" stroke="#111" stroke-width="1.5" stroke-linejoin="round"/></svg>
<div class="t" style="left:375.10px;top:254.73px;font-size:9.8px;line-height:10.95px;color:#222;font-weight:400;font-style:normal;">total</div>
<div class="a" style="left:353.7px;top:444.6px;width:56.1px;height:16.4px;background:#fff;border-radius:4px;box-shadow:0 0 0 0.5px rgba(0,0,0,.16),0 0.8px 1px rgba(0,0,0,.18)"></div>
<div class="t" style="left:374.90px;top:446.81px;font-size:11px;line-height:12.29px;color:#333;font-weight:400;font-style:normal;-webkit-text-stroke:0.3px currentColor">All</div>
<div class="a" style="left:422.8px;top:444.6px;width:56.1px;height:16.4px;background:#fff;border-radius:4px;box-shadow:0 0 0 0.5px rgba(0,0,0,.16),0 0.8px 1px rgba(0,0,0,.18)"></div>
<div class="t" style="left:437.80px;top:446.81px;font-size:11px;line-height:12.29px;color:#333;font-weight:400;font-style:normal;-webkit-text-stroke:0.3px currentColor">None</div>
<div class="a" style="left:608.2px;top:448px;width:10.5px;height:11px;background:#fff;border-radius:2.5px;box-shadow:0 0 0 0.5px #c8c8c8,0 0.5px 1px rgba(0,0,0,.12)"></div>
<div class="t" style="left:622.90px;top:447.55px;font-size:11.1px;line-height:12.40px;color:#333;font-weight:400;font-style:normal;-webkit-text-stroke:0.3px currentColor">Exclude</div>
<div class="t" style="left:358.50px;top:480.25px;font-size:9px;line-height:10.05px;color:#222;font-weight:400;font-style:normal;">Summary</div>
<div class="a" style="left:355.5px;top:497px;width:310.5px;height:105.5px;background:#dbdbdb;border-radius:4px;box-shadow:inset 0 0 0 0.5px #d2d2d2"></div>
<div class="t" style="left:418.70px;transform:translateX(-100%);top:506.47px;font-size:11.3px;line-height:12.62px;color:#333;font-weight:400;font-style:normal;-webkit-text-stroke:0.3px currentColor">Field:</div>
<div class="t" style="left:426.10px;top:506.47px;font-size:11.3px;line-height:12.62px;color:#333;font-weight:400;font-style:normal;-webkit-text-stroke:0.3px currentColor">[Gender]</div>
<div class="t" style="left:418.70px;transform:translateX(-100%);top:524.62px;font-size:11.3px;line-height:12.62px;color:#333;font-weight:400;font-style:normal;-webkit-text-stroke:0.3px currentColor">Selection:</div>
<div class="t" style="left:426.10px;top:524.62px;font-size:11.3px;line-height:12.62px;color:#333;font-weight:400;font-style:normal;-webkit-text-stroke:0.3px currentColor">Selected 3 of 3 values</div>
<div class="t" style="left:418.70px;transform:translateX(-100%);top:542.77px;font-size:11.3px;line-height:12.62px;color:#333;font-weight:400;font-style:normal;-webkit-text-stroke:0.3px currentColor">Wildcard:</div>
<div class="t" style="left:426.10px;top:542.77px;font-size:11.3px;line-height:12.62px;color:#1d1df2;font-weight:400;font-style:normal;-webkit-text-stroke:0.3px currentColor">All</div>
<div class="t" style="left:418.70px;transform:translateX(-100%);top:560.92px;font-size:11.3px;line-height:12.62px;color:#333;font-weight:400;font-style:normal;-webkit-text-stroke:0.3px currentColor">Condition:</div>
<div class="t" style="left:426.10px;top:560.92px;font-size:11.3px;line-height:12.62px;color:#1d1df2;font-weight:400;font-style:normal;-webkit-text-stroke:0.3px currentColor">None</div>
<div class="t" style="left:418.70px;transform:translateX(-100%);top:579.07px;font-size:11.3px;line-height:12.62px;color:#333;font-weight:400;font-style:normal;-webkit-text-stroke:0.3px currentColor">Limit:</div>
<div class="t" style="left:426.10px;top:579.07px;font-size:11.3px;line-height:12.62px;color:#1d1df2;font-weight:400;font-style:normal;-webkit-text-stroke:0.3px currentColor">None</div>
<div class="a" style="left:334.4px;top:636px;width:56.7px;height:16.3px;background:#fff;border-radius:4px;box-shadow:0 0 0 0.5px rgba(0,0,0,.16),0 0.8px 1px rgba(0,0,0,.18)"></div>
<div class="t" style="left:348.40px;top:638.37px;font-size:10.6px;line-height:11.84px;color:#333;font-weight:400;font-style:normal;-webkit-text-stroke:0.3px currentColor">Reset</div>
<div class="a" style="left:403.9px;top:636px;width:55.9px;height:16.3px;background:#f0f0f0;border-radius:4px;box-shadow:0 0 0 0.5px rgba(0,0,0,.08),0 0.5px 1px rgba(0,0,0,.08)"></div>
<div class="t" style="left:417.70px;top:638.41px;font-size:10.6px;line-height:11.84px;color:#b0b0b0;font-weight:400;font-style:normal;-webkit-text-stroke:0.3px currentColor">Apply</div>
<div class="a" style="left:560.9px;top:636px;width:56.6px;height:16.3px;background:#fff;border-radius:4px;box-shadow:0 0 0 0.5px rgba(0,0,0,.16),0 0.8px 1px rgba(0,0,0,.18)"></div>
<div class="t" style="left:572.20px;top:638.15px;font-size:11px;line-height:12.29px;color:#333;font-weight:400;font-style:normal;-webkit-text-stroke:0.3px currentColor">Cancel</div>
<div class="a" style="left:630.8px;top:636px;width:56.2px;height:16.3px;background:linear-gradient(#2b8cfc,#137cf8);border-radius:4px;box-shadow:0 0.5px 1px rgba(0,0,0,.2)"></div>
<div class="t" style="left:651.60px;top:638.04px;font-size:11px;line-height:12.29px;color:#fff;font-weight:400;font-style:normal;-webkit-text-stroke:0.3px currentColor">OK</div>
</body></html>
